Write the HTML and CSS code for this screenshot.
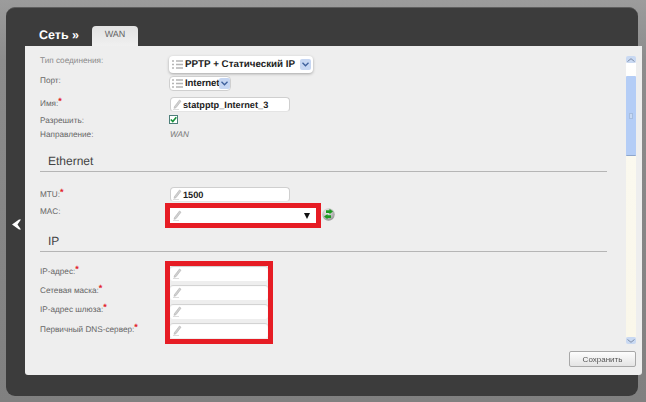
FILE: index.html
```html
<!DOCTYPE html>
<html lang="ru">
<head>
<meta charset="utf-8">
<title>Сеть WAN</title>
<link rel="stylesheet" href="styles.css">
</head>
<body>
<div class="window">
  <header class="head">
    <h1 class="title">Сеть »</h1>
    <div class="tab">WAN</div>
  </header>
  <div class="main">
    <div class="side">
      <svg class="back" width="11" height="11" viewBox="0 0 11 11"><path d="M10 0.5 L8 0.5 L1 5.5 L8 10.5 L10 10.5 L6.5 5.5 Z" fill="#fff"/></svg>
    </div>
    <div class="panel">
      <div class="upper">
        <form class="form">
          <div class="row row-type">
            <span class="label faded">Тип соединения:</span>
            <div class="select select-wide">
              <svg class="ico" width="11" height="11" viewBox="0 0 11 11"><path d="M0 2h2M0 5.5h2M0 9h2M4 2h7M4 5.5h7M4 9h7" stroke="#b5b5b5" stroke-width="1.5"/></svg>
              <span class="select-text">PPTP + Статический IP</span>
              <span class="chev"><svg width="7" height="5" viewBox="0 0 7 5"><path d="M0.5 0.8 L3.5 3.8 L6.5 0.8" fill="none" stroke="#3d5f9c" stroke-width="1.3"/></svg></span>
            </div>
          </div>
          <div class="row row-port">
            <span class="label">Порт:</span>
            <div class="select select-port">
              <svg class="ico" width="11" height="11" viewBox="0 0 11 11"><path d="M0 2h2M0 5.5h2M0 9h2M4 2h7M4 5.5h7M4 9h7" stroke="#b5b5b5" stroke-width="1.5"/></svg>
              <span class="select-text">Internet</span>
              <span class="chev"><svg width="7" height="5" viewBox="0 0 7 5"><path d="M0.5 0.8 L3.5 3.8 L6.5 0.8" fill="none" stroke="#3d5f9c" stroke-width="1.3"/></svg></span>
            </div>
          </div>
          <div class="row row-name">
            <span class="label">Имя:<i class="req">*</i></span>
            <div class="field field-std">
              <svg class="pen" width="9" height="11" viewBox="0 0 9 11"><path d="M1.5 7.5 L6.5 1 L8 2.2 L3 8.7 L1 9.3 Z" fill="#d0d0d0" stroke="#b0b0b0" stroke-width="0.6"/><path d="M0 10.5h6" stroke="#ddd"/></svg>
              <span class="value">statpptp_Internet_3</span>
            </div>
          </div>
          <div class="row row-allow">
            <span class="label">Разрешить:</span>
            <span class="check"><svg width="7" height="7" viewBox="0 0 7 7"><path d="M0.8 3.5 L2.8 5.6 L6.3 1.2" fill="none" stroke="#17923a" stroke-width="1.6"/></svg></span>
          </div>
          <div class="row row-dir">
            <span class="label">Направление:</span>
            <span class="plain">WAN</span>
          </div>

          <h2 class="section section-eth">Ethernet</h2>

          <div class="row row-mtu">
            <span class="label">MTU:<i class="req">*</i></span>
            <div class="field field-std">
              <svg class="pen" width="9" height="11" viewBox="0 0 9 11"><path d="M1.5 7.5 L6.5 1 L8 2.2 L3 8.7 L1 9.3 Z" fill="#d0d0d0" stroke="#b0b0b0" stroke-width="0.6"/><path d="M0 10.5h6" stroke="#ddd"/></svg>
              <span class="value">1500</span>
            </div>
          </div>
          <div class="row row-mac">
            <span class="label">MAC:</span>
            <div class="mark mark-mac">
              <div class="field field-mac">
                <svg class="pen" width="9" height="11" viewBox="0 0 9 11"><path d="M1.5 7.5 L6.5 1 L8 2.2 L3 8.7 L1 9.3 Z" fill="#d0d0d0" stroke="#b0b0b0" stroke-width="0.6"/><path d="M0 10.5h6" stroke="#ddd"/></svg>
                <span class="tri"></span>
              </div>
            </div>
            <svg class="swap" width="13" height="13" viewBox="0 0 13 13"><defs><radialGradient id="g" cx="0.4" cy="0.3" r="0.8"><stop offset="0" stop-color="#f4f4f4"/><stop offset="1" stop-color="#8c8c8c"/></radialGradient></defs><circle cx="6.5" cy="6.5" r="6.2" fill="url(#g)"/><path d="M4 2.2h3.5V0.8L11 3.6 7.5 6.2V4.9H4Z" fill="#1e9a22"/><path d="M9 7.2H5.5V5.9L2 8.6l3.5 2.7v-1.4H9Z" fill="#1e9a22"/></svg>
          </div>

          <h2 class="section section-ip">IP</h2>

          <div class="ip-group">
            <div class="ip-labels">
              <span class="label">IP-адрес:<i class="req">*</i></span>
              <span class="label">Сетевая маска:<i class="req">*</i></span>
              <span class="label">IP-адрес шлюза:<i class="req">*</i></span>
              <span class="label">Первичный DNS-сервер:<i class="req">*</i></span>
            </div>
            <div class="mark mark-ip">
              <div class="field field-ip"><svg class="pen" width="9" height="11" viewBox="0 0 9 11"><path d="M1.5 7.5 L6.5 1 L8 2.2 L3 8.7 L1 9.3 Z" fill="#d0d0d0" stroke="#b0b0b0" stroke-width="0.6"/><path d="M0 10.5h6" stroke="#ddd"/></svg></div>
              <div class="field field-ip"><svg class="pen" width="9" height="11" viewBox="0 0 9 11"><path d="M1.5 7.5 L6.5 1 L8 2.2 L3 8.7 L1 9.3 Z" fill="#d0d0d0" stroke="#b0b0b0" stroke-width="0.6"/><path d="M0 10.5h6" stroke="#ddd"/></svg></div>
              <div class="field field-ip"><svg class="pen" width="9" height="11" viewBox="0 0 9 11"><path d="M1.5 7.5 L6.5 1 L8 2.2 L3 8.7 L1 9.3 Z" fill="#d0d0d0" stroke="#b0b0b0" stroke-width="0.6"/><path d="M0 10.5h6" stroke="#ddd"/></svg></div>
              <div class="field field-ip"><svg class="pen" width="9" height="11" viewBox="0 0 9 11"><path d="M1.5 7.5 L6.5 1 L8 2.2 L3 8.7 L1 9.3 Z" fill="#d0d0d0" stroke="#b0b0b0" stroke-width="0.6"/><path d="M0 10.5h6" stroke="#ddd"/></svg></div>
            </div>
          </div>
        </form>
        <div class="scrollbar">
          <span class="sb-btn"><svg width="8" height="4" viewBox="0 0 8 4"><path d="M0.5 3.5 L4 0.7 L7.5 3.5" fill="none" stroke="#7f8ea8" stroke-width="1"/></svg></span>
          <div class="track">
            <div class="thumb"><span class="grip"></span></div>
          </div>
          <span class="sb-btn"><svg width="8" height="4" viewBox="0 0 8 4"><path d="M0.5 0.5 L4 3.3 L7.5 0.5" fill="none" stroke="#7f8ea8" stroke-width="1"/></svg></span>
        </div>
      </div>
      <div class="foot">
        <button class="save" type="button">Сохранить</button>
      </div>
    </div>
  </div>
</div>
</body>
</html>
```

FILE: styles.css
```css
* { box-sizing: border-box; }
html, body { height: 100%; }
body {
  margin: 0;
  overflow: hidden;
  background: linear-gradient(#9c9c9c 0, #8c8c8c 60px, #808080 100%);
  font-family: "Liberation Sans", Arial, sans-serif;
  text-rendering: geometricPrecision;
}
.window {
  margin: 7px 0 0 6px;
  width: 632px;
  height: 389px;
  background: #3c3c3c;
  border-radius: 9px;
  border-top: 1px solid #5e5e5e;
  display: flex;
  flex-direction: column;
  filter: blur(0.3px);
}
.head {
  height: 38px;
  display: flex;
  align-items: flex-end;
  padding-left: 33px;
}
.title {
  margin: 0 0 3px;
  width: 53px;
  font-size: 12.5px;
  line-height: 16px;
  font-weight: bold;
  color: #fff;
}
.tab {
  width: 46px;
  height: 20px;
  background: linear-gradient(#e2e2e2, #f0f0f0);
  border-radius: 4px 4px 0 0;
  text-align: center;
  font-size: 9px;
  line-height: 17px;
  color: #666;
}
.main {
  flex: 1;
  display: flex;
  min-height: 0;
}
.side {
  width: 19px;
  padding: 173px 0 0 5px;
}
.back { display: block; }
.panel {
  width: 617px;
  height: 329px;
  margin-right: -4px;
  background: #eeeeee;
  border-radius: 0 0 3px 3px;
  display: flex;
  flex-direction: column;
}
.upper {
  height: 305px;
  display: flex;
}
.form {
  width: 601px;
  padding: 9px 19px 0 15px;
  overflow: hidden;
}
.row {
  display: flex;
  align-items: flex-start;
}
.label {
  display: block;
  width: 130px;
  height: 12px;
  flex: none;
  font-size: 8.2px;
  line-height: 12px;
  color: #666;
  white-space: nowrap;
}
.faded { color: #8a8a8a; }
.req {
  color: #e2222a;
  font-style: normal;
  font-weight: bold;
  font-size: 9px;
  position: relative;
  top: -2px;
}
.row-type { height: 20px; }
.row-port { height: 21px; }
.row-name { height: 18px; }
.row-allow { height: 15px; }
.row-dir { height: 15px; }
.row-name .label { margin-top: 1px; }
.row-allow .label { margin-top: 1px; }
.select {
  display: flex;
  align-items: center;
  margin-left: -1px;
  background: #fff;
  border-radius: 4px;
  padding-left: 3px;
}
.select-wide {
  width: 144px;
  height: 17px;
  margin-top: 1px;
  box-shadow: 0 1px 3px rgba(0, 0, 0, 0.3);
}
.select-port {
  width: 62px;
  height: 15px;
  margin-top: 1px;
  border: 1px solid #cfcfcf;
  padding-left: 2px;
}
.ico { flex: none; }
.select-text {
  flex: 1;
  margin-left: 2px;
  font-size: 9.8px;
  font-weight: bold;
  color: #222;
  white-space: nowrap;
}
.select-port .select-text { font-size: 9.6px; letter-spacing: -0.1px; }
.chev {
  flex: none;
  width: 11px;
  height: 11px;
  margin-right: 1px;
  background: #c6d6f2;
  border-radius: 2px;
  display: flex;
  align-items: center;
  justify-content: center;
}
.select-wide .chev { margin-right: 2px; }
.field {
  display: flex;
  align-items: center;
  background: #fff;
  border-radius: 4px;
  padding-left: 3px;
}
.field-std {
  width: 120px;
  height: 15px;
  margin-top: 1px;
  border: 1px solid #cfcfcf;
  border-bottom-color: #e4e4e4;
  padding-left: 2px;
}
.row-mtu .field-std { margin-top: 0; }
.pen { flex: none; }
.value {
  margin-left: 1px;
  font-size: 9.2px;
  font-weight: bold;
  color: #222;
  white-space: nowrap;
}
.check {
  width: 9px;
  height: 9px;
  margin: 1px 0 0 -1px;
  background: #fff;
  border: 1px solid #4e7f7a;
  display: flex;
  align-items: center;
  justify-content: center;
}
.check svg { display: block; flex: none; }
.plain {
  font-size: 8.2px;
  line-height: 12px;
  font-style: italic;
  color: #777;
}
.section {
  margin: 0;
  height: 21px;
  padding-left: 8px;
  border-bottom: 1px solid #b5b5b5;
  font-size: 12px;
  line-height: 20px;
  font-weight: normal;
  color: #444;
}
.section-eth { margin-top: 7px; margin-bottom: 15px; }
.section-ip { margin-top: 3px; margin-bottom: 9px; }
.row-mtu { height: 16px; }
.row-mtu .label { margin-top: 1px; }
.row-mac { height: 25px; }
.row-mac .label { margin-top: 3px; }
.mark {
  margin-left: -5px;
  border: 5px solid #e61c24;
  flex: none;
}
.mark-mac { width: 156px; height: 25px; }
.field-mac {
  height: 15px;
  border-radius: 0;
  padding-right: 6px;
  justify-content: space-between;
}
.tri {
  width: 0;
  height: 0;
  border-left: 3.5px solid transparent;
  border-right: 3.5px solid transparent;
  border-top: 6px solid #111;
}
.swap { flex: none; margin: 5px 0 0 1px; }
.ip-group { display: flex; align-items: flex-start; }
.ip-labels {
  width: 130px;
  flex: none;
  display: flex;
  flex-direction: column;
  padding-top: 4px;
  gap: 7.2px;
}
.mark-ip {
  width: 108px;
  height: 83px;
  display: flex;
  flex-direction: column;
  gap: 4px;
  background: #eee;
}
.field-ip {
  height: 15px;
  border-radius: 3px;
  box-shadow: inset 0 1px 1px #cfcfcf;
}
.scrollbar {
  width: 10px;
  margin-top: 10px;
  height: 288px;
  display: flex;
  flex-direction: column;
}
.sb-btn {
  height: 7px;
  flex: none;
  background: #c9d9f2;
  border-radius: 2px;
  display: flex;
  align-items: center;
  justify-content: center;
}
.track {
  flex: 1;
  padding-top: 13px;
  background: linear-gradient(#ffffff, #fbf9ef 30%, #faf7ea);
}
.thumb {
  height: 80px;
  background: #b4cdf6;
  border-bottom: 1px solid #8ea6cc;
  border-radius: 1px;
  display: flex;
  align-items: center;
  justify-content: center;
}
.grip {
  width: 4px;
  height: 6px;
  background: #c7d9f5;
  border: 1px solid #a6bddf;
}
.foot {
  flex: 1;
  display: flex;
  justify-content: flex-end;
  align-items: flex-start;
  padding: 0 6px 0 0;
}
.save {
  width: 67px;
  height: 16px;
  padding: 0;
  border: 1px solid #a8a8a8;
  border-radius: 2px;
  background: linear-gradient(#fdfdfd, #e4e4e4);
  font-family: inherit;
  font-size: 8px;
  line-height: 13px;
  color: #555;
}
```
